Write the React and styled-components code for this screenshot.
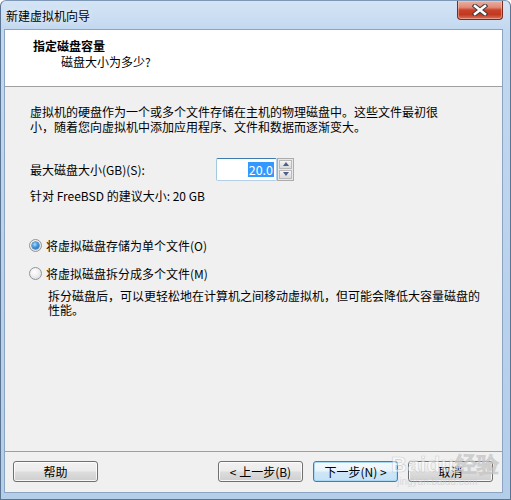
import React from "react";
import styled, { createGlobalStyle } from "styled-components";

const Global = createGlobalStyle`
  html, body { margin: 0; padding: 0; background: #fff; }
  body { width: 511px; height: 500px; overflow: hidden; }
  * { box-sizing: border-box; }
`;

const FONT = `"Noto Sans CJK SC", "Noto Sans", sans-serif`;

const Window = styled.div`
  position: relative;
  width: 511px;
  height: 500px;
  display: flex;
  flex-direction: column;
  padding: 0 7px 6px 3px;
  border: 1px solid #5a7594;
  border-top-color: #7d98b6;
  border-radius: 6px 6px 0 0;
  background: linear-gradient(180deg, #d4e4f5 0%, #c2d8f0 6%, #bcd4ee 40%, #b4cde9 100%);
  font-family: ${FONT};
  color: #000;
`;

const TitleBar = styled.div`
  height: 28px;
  display: flex;
  align-items: flex-start;
  flex-shrink: 0;
`;

const TitleText = styled.div`
  font-size: 12px;
  line-height: 16px;
  padding: 7px 0 0 2px;
  text-shadow: 0 0 6px rgba(255, 255, 255, 0.9);
`;

const CloseButton = styled.div`
  margin-left: auto;
  width: 46px;
  height: 19px;
  border: 1px solid #7b2a1d;
  border-top: none;
  border-radius: 0 0 4px 4px;
  background: linear-gradient(180deg, #eab0a4 0%, #e08a78 35%, #c9432c 50%, #c0391f 75%, #d9725c 100%);
  box-shadow: inset 0 0 0 1px rgba(255, 210, 200, 0.45);
  display: flex;
  align-items: center;
  justify-content: center;
`;

const Client = styled.div`
  flex: 1;
  display: flex;
  flex-direction: column;
  background: #f0f0f0;
  border: 1px solid #8aa4c2;
  min-height: 0;
`;

const Header = styled.div`
  height: 57px;
  flex-shrink: 0;
  background: #fff;
  border-bottom: 1px solid #a0a0a0;
  padding: 8px 0 0 28px;
`;

const HeaderTitle = styled.div`
  font-size: 12px;
  font-weight: 700;
  line-height: 16px;
`;

const HeaderSub = styled.div`
  font-size: 12px;
  line-height: 16px;
  padding-left: 28px;
`;

const Body = styled.div`
  flex: 1;
  padding: 17px 20px 0 25px;
  font-size: 12px;
`;

const Paragraph = styled.p`
  margin: 0;
  line-height: 15px;
`;

const SizeRow = styled.div`
  display: flex;
  align-items: center;
  margin-top: 24px;
  height: 22px;
`;

const Label = styled.div`
  width: 186px;
  line-height: 15px;
`;

const SpinBox = styled.div`
  display: flex;
  height: 23px;
`;

const SpinInput = styled.div`
  width: 61px;
  height: 23px;
  border: 1px solid #b5cfe7;
  border-top-color: #3d7bad;
  border-left-color: #a4c9e3;
  border-radius: 2px;
  background: #fff;
  display: flex;
  align-items: center;
  justify-content: flex-end;
  padding-right: 2px;
`;

const Selected = styled.span`
  background: #3399ff;
  color: #fff;
  font-size: 12.5px;
  line-height: 15px;
  padding: 0 0 0 1px;
  border-right: 1px solid #c47a2a;
`;

const SpinButtons = styled.div`
  display: flex;
  flex-direction: column;
  width: 17px;
  height: 23px;
  border: 1px solid #acacac;
  background: #e8e8e8;
  padding: 1px;
  gap: 1px;
`;

const SpinBtn = styled.div`
  flex: 1;
  border: 1px solid #b9b9b9;
  background: linear-gradient(180deg, #f7f7f7 0%, #e6e6e6 50%, #dadada 100%);
  display: flex;
  align-items: center;
  justify-content: center;
`;

const Arrow = styled.span`
  width: 0;
  height: 0;
  border-left: 3.5px solid transparent;
  border-right: 3.5px solid transparent;
  ${(p) =>
    p.$up
      ? "border-bottom: 4px solid #4d5f8c;"
      : "border-top: 4px solid #4d5f8c;"}
`;

const Hint = styled.div`
  margin-top: 8px;
  line-height: 15px;
`;

const RadioRow = styled.div`
  display: flex;
  align-items: center;
  gap: 4px;
  line-height: 15px;
  margin-top: ${(p) => p.$mt}px;
`;

const Radio = styled.span`
  width: 13px;
  height: 13px;
  border-radius: 50%;
  border: 1px solid #8f9598;
  background: radial-gradient(circle at 40% 35%, #ffffff 0%, #f1f1f1 40%, #d6d6d6 100%);
  display: flex;
  align-items: center;
  justify-content: center;
  margin-left: -1px;
`;

const RadioDot = styled.span`
  width: 7px;
  height: 7px;
  border-radius: 50%;
  background: radial-gradient(circle at 40% 35%, #a9dcff 0%, #3e98df 45%, #12579c 100%);
  box-shadow: 0 0 0 0.5px #0d4a85;
`;

const Description = styled.div`
  margin: 8px 0 0 18px;
  line-height: 14px;
  font-size: 12px;
`;

const Footer = styled.div`
  height: 41px;
  flex-shrink: 0;
  border-top: 1px solid #a0a0a0;
  display: flex;
  align-items: flex-start;
  padding: 9px 9px 0 8px;
  gap: 10px;
`;

const Button = styled.button`
  width: 85px;
  height: 21px;
  padding: 0;
  font-family: ${FONT};
  font-size: 12px;
  line-height: 15px;
  color: #000;
  border: 1px solid ${(p) => (p.$default ? "#3c7fb1" : "#707070")};
  border-radius: 3px;
  background: ${(p) =>
    p.$default
      ? "linear-gradient(180deg, #f4fafd 0%, #e8f4fb 48%, #cfe7f7 52%, #c4e1f5 100%)"
      : "linear-gradient(180deg, #f2f2f2 0%, #ebebeb 48%, #dddddd 52%, #cfcfcf 100%)"};
  box-shadow: inset 0 0 0 1px ${(p) => (p.$default ? "#a9d8f5" : "rgba(255,255,255,0.8)")};
  margin-left: ${(p) => (p.$push ? "auto" : "0")};
`;

const Watermark = styled.div`
  position: absolute;
  left: 390px;
  top: 452px;
  display: flex;
  flex-direction: column;
  align-items: flex-start;
  pointer-events: none;
`;

const WmBig = styled.span`
  font-family: "Liberation Sans", sans-serif;
  font-weight: 700;
  font-size: 22px;
  line-height: 24px;
  color: rgba(255, 255, 255, 0.55);
  -webkit-text-stroke: 0.6px rgba(170, 170, 170, 0.55);
  letter-spacing: 0.5px;
`;

const WmSmall = styled.span`
  font-family: "Liberation Sans", sans-serif;
  font-size: 10px;
  line-height: 10px;
  color: rgba(200, 200, 200, 0.6);
  padding-left: 6px;
`;

function CloseIcon() {
  return (
    <svg width="16" height="12" viewBox="0 0 16 12">
      <path d="M3 2 L13 10 M13 2 L3 10" stroke="#3c3c3c" strokeWidth="4.6" strokeLinecap="square" />
      <path d="M3 2 L13 10 M13 2 L3 10" stroke="#ffffff" strokeWidth="2.6" strokeLinecap="square" />
    </svg>
  );
}

export default function App() {
  return (
    <>
      <Global />
      <Window>
        <TitleBar>
          <TitleText>新建虚拟机向导</TitleText>
          <CloseButton>
            <CloseIcon />
          </CloseButton>
        </TitleBar>
        <Client>
          <Header>
            <HeaderTitle>指定磁盘容量</HeaderTitle>
            <HeaderSub>磁盘大小为多少?</HeaderSub>
          </Header>
          <Body>
            <Paragraph>
              虚拟机的硬盘作为一个或多个文件存储在主机的物理磁盘中。这些文件最初很
              <br />
              小，随着您向虚拟机中添加应用程序、文件和数据而逐渐变大。
            </Paragraph>
            <SizeRow>
              <Label>最大磁盘大小(GB)(S):</Label>
              <SpinBox>
                <SpinInput>
                  <Selected>20.0</Selected>
                </SpinInput>
                <SpinButtons>
                  <SpinBtn>
                    <Arrow $up />
                  </SpinBtn>
                  <SpinBtn>
                    <Arrow />
                  </SpinBtn>
                </SpinButtons>
              </SpinBox>
            </SizeRow>
            <Hint>针对 FreeBSD 的建议大小: 20 GB</Hint>
            <RadioRow $mt={35}>
              <Radio>
                <RadioDot />
              </Radio>
              <span>将虚拟磁盘存储为单个文件(O)</span>
            </RadioRow>
            <RadioRow $mt={13}>
              <Radio />
              <span>将虚拟磁盘拆分成多个文件(M)</span>
            </RadioRow>
            <Description>
              拆分磁盘后，可以更轻松地在计算机之间移动虚拟机，但可能会降低大容量磁盘的
              <br />
              性能。
            </Description>
          </Body>
          <Footer>
            <Button>帮助</Button>
            <Button $push>&lt; 上一步(B)</Button>
            <Button $default>下一步(N) &gt;</Button>
            <Button>取消</Button>
          </Footer>
        </Client>
        <Watermark>
          <WmBig>Baidu经验</WmBig>
          <WmSmall>jingyan.baidu.com</WmSmall>
        </Watermark>
      </Window>
    </>
  );
}
